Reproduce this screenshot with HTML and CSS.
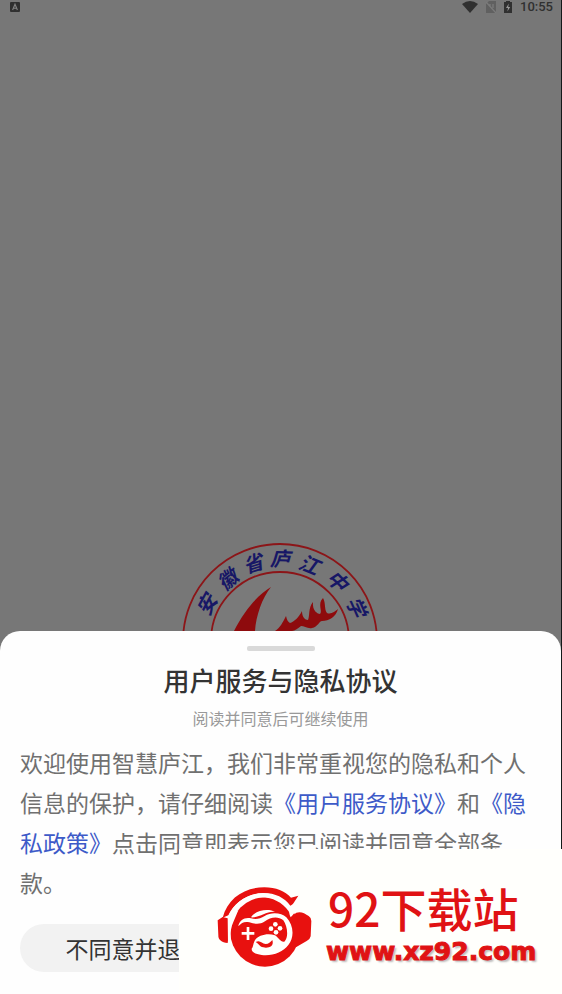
FILE: index.html
```html
<!DOCTYPE html>
<html lang="zh-CN">
<head>
<meta charset="utf-8">
<meta name="viewport" content="width=device-width, initial-scale=1">
<title>用户服务与隐私协议</title>
<link rel="stylesheet" href="styles.css">
</head>
<body>
<div class="screen">
  <header class="status">
    <svg class="status-app" viewBox="0 0 10 10" width="10" height="10" aria-hidden="true">
      <rect width="10" height="10" rx="1" fill="#303030"/>
      <path d="M2.6 8 5 2.2 7.4 8M3.5 6.2h3" fill="none" stroke="#858585" stroke-width="1.1"/>
    </svg>
    <div class="status-icons">
      <svg viewBox="0 0 16 12" width="16" height="12" aria-hidden="true"><path d="M0 3Q8-3 16 3L8 12Z" fill="#303030"/></svg>
      <svg viewBox="0 0 10 12" width="10" height="12" aria-hidden="true"><path d="M3 0h7v12H0V3Z" fill="#606060"/><path d="M0 1 10 12M4 3v2M7 3v4" stroke="#7b7b7b" stroke-width="1.3"/></svg>
      <svg viewBox="0 0 8 12" width="8" height="12" aria-hidden="true"><path d="M0 1h2V0h4v1h2v11H0Z" fill="#303030"/><path d="M4.8 2.5 2 7h2l-.6 3.5L6.2 6h-2Z" fill="#999"/></svg>
      <span class="clock">10:55</span>
    </div>
  </header>

  <main class="splash">
    <svg class="emblem" viewBox="180 541 200 90" width="200" height="90" role="img" aria-label="安徽省庐江中学">
      <circle cx="279" cy="641" r="97" fill="none" stroke="#8c1518" stroke-width="1.8"/>
      <circle cx="279" cy="641" r="69" fill="#7a7a7a" stroke="#8c1518" stroke-width="1.8"/>
      <g class="emblem-text">
        <text transform="translate(206 605) rotate(-62)" y="7">安</text>
        <text transform="translate(227 580) rotate(-40)" y="7">徽</text>
        <text transform="translate(252 564) rotate(-18)" y="7">省</text>
        <text transform="translate(279 559) rotate(2)" y="7">庐</text>
        <text transform="translate(308 565) rotate(22)" y="7">江</text>
        <text transform="translate(336 581) rotate(44)" y="7">中</text>
        <text transform="translate(355 607) rotate(66)" y="7">学</text>
      </g>
      <path fill="#8e0b0d" d="M270 587C258 594 244 609 233 631H254C255 616 261 598 270 587Z"/>
      <path fill="#8e0b0d" d="M274 631C279 628 282 622 285 616C286 620 287 622 289 623C293 622 298 617 301 611C301 617 304 620 307 620C309 616 307 608 312 602C311 611 317 614 319 614C322 611 316 604 322 598C325 603 323 609 326 613C330 615 334 611 337 609C335 617 328 621 321 621C318 621 317 627 311 628C307 629 303 626 300 626C297 628 294 631 291 631Z"/>
    </svg>
  </main>

  <section class="sheet" role="dialog" aria-labelledby="sheet-title">
    <div class="handle"></div>
    <h1 class="title" id="sheet-title">用户服务与隐私协议</h1>
    <p class="subtitle">阅读并同意后可继续使用</p>
    <p class="terms">欢迎使用智慧庐江，我们非常重视您的隐私和个人信息的保护，请仔细阅读<a href="#service">《用户服务协议》</a>和<a href="#privacy">《隐私政策》</a>点击同意即表示您已阅读并同意全部条款。</p>
    <button class="decline" type="button">不同意并退出</button>
  </section>

  <aside class="site-badge">
    <svg class="site-logo" viewBox="120 120 300 252" width="100" height="84" aria-hidden="true">
      <g fill="#e8110f">
        <path d="M143 218C158 160 208 127 268 127C303 127 330 138 348 158L370 152L346 189C325 160 296 144 265 145C220 145 179 170 160 211Z"/>
        <path d="M143 216 167 222 158 294C140 292 129 285 130 270L128 226Z"/>
        <path d="M340 222 364 203Q376 199 387 205L401 213Q409 218 409 228L407 274Q405 284 395 288L364 306L340 300Z"/>
        <circle cx="270" cy="261" r="104"/>
      </g>
      <path fill="#fffffc" d="M158 218C176 172 219 144 264 144C302 144 328 158 346 182L383 160C376 184 363 200 347 217C342 208 344 204 341 199C322 172 291 157 262 157C222 158 193 175 173 206L190 196L176 229C165 252 165 278 167 298L159 294Z"/>
      <path fill="#fffffc" d="M190 244C192 225 211 215 228 220C242 224 255 222 269 213C289 201 319 203 334 217C356 240 359 277 340 300C324 322 291 334 260 330C241 328 229 322 230 311C235 306 234 295 239 287C250 269 280 264 300 271C313 280 316 292 328 290C342 276 337 243 325 226C307 211 285 218 270 229C253 240 240 237 223 232C208 229 200 233 190 244Z"/>
      <path fill="#fffffc" d="M228 217C239 197 278 188 302 201C274 197 255 219 228 217Z"/>
      <path fill="none" stroke="#fffffc" stroke-width="8" d="M219 246v39M200 265h38"/>
      <g fill="#fffffc"><circle cx="301" cy="238" r="7"/><circle cx="288" cy="251" r="7"/><circle cx="315" cy="250" r="7"/><circle cx="303" cy="262" r="7"/></g>
      <path fill="#e8110f" d="M242 291C255 283 260 296 272 297C281 297 286 292 292 285C299 306 278 310 265 307C253 305 252 296 242 291Z"/>
    </svg>
    <div class="site-text">
      <span class="site-name">92下载站</span>
      <span class="site-url">www.xz92.com</span>
    </div>
  </aside>
</div>
</body>
</html>
```
FILE: styles.css
```css
* {
  box-sizing: border-box;
}

body {
  margin: 0;
  font-family: "Noto Sans CJK SC", sans-serif;
  background: #777;
}

.screen {
  position: relative;
  display: flex;
  flex-direction: column;
  min-height: 100vh;
  border-right: 1px solid #141a1a;
}

.status {
  display: flex;
  justify-content: space-between;
  align-items: center;
  height: 13px;
  padding: 0 8px 0 10px;
}

.status-icons {
  display: flex;
  align-items: center;
  gap: 8px;
}

.clock {
  font: 500 13px/13px Roboto, sans-serif;
  color: #303030;
}

.splash {
  flex: 1;
  display: flex;
  justify-content: center;
  align-items: flex-end;
}

.emblem {
  display: block;
}

.emblem-text {
  font-family: "Noto Sans CJK SC", sans-serif;
  font-size: 20px;
  font-weight: 700;
  font-style: italic;
  text-anchor: middle;
  fill: #171766;
}

.sheet {
  display: flex;
  flex-direction: column;
  padding: 15px 20px 22px;
  background: #fefefe;
  border-radius: 20px 20px 0 0;
}

.handle {
  align-self: center;
  width: 68px;
  height: 5px;
  border-radius: 2px;
  background: #d9d9d9;
}

.title {
  margin: 9px 0 0;
  font-size: 26px;
  line-height: 40px;
  font-weight: 500;
  text-align: center;
  color: #333;
}

.subtitle {
  margin: 6px 0 0;
  font-size: 16px;
  line-height: 24px;
  font-weight: 400;
  text-align: center;
  color: #999;
}

.terms {
  margin: 12px 0 22px;
  font-size: 23px;
  line-height: 40px;
  font-weight: 400;
  color: #707070;
}

.terms a {
  color: #3d5ac8;
  text-decoration: none;
}

.decline {
  width: 44%;
  height: 48px;
  padding: 0;
  border: 0;
  border-radius: 24px;
  background: #f2f2f2;
  font-family: inherit;
  font-size: 23px;
  line-height: 48px;
  font-weight: 400;
  color: #333;
}

.site-badge {
  position: absolute;
  left: 179px;
  right: -1px;
  bottom: 0;
  display: flex;
  align-items: center;
  gap: 11px;
  height: 145px;
  padding: 10px 24px 0 36px;
  background: #fffffc;
}

.site-logo {
  flex: none;
}

.site-text {
  display: flex;
  flex-direction: column;
  color: #e01214;
}

.site-name {
  padding-left: 2px;
  font-size: 46px;
  line-height: 50px;
  font-weight: 500;
}

.site-url {
  font-family: "DejaVu Sans", sans-serif;
  font-size: 25px;
  line-height: 40px;
  font-weight: 700;
  -webkit-text-stroke: 1px #e01214;
  text-shadow: 2px 2px 2px #bbb;
}
```
